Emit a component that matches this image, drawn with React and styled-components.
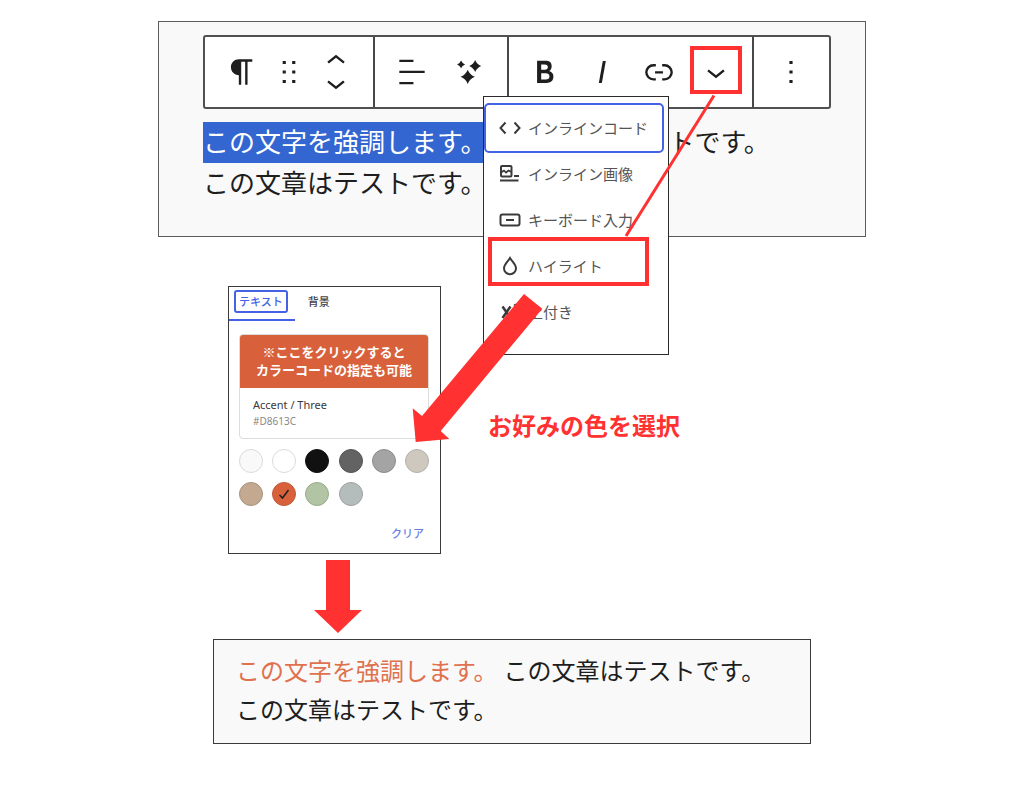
import React, { useState } from "react";
import styled, { createGlobalStyle, css } from "styled-components";

const RED = "#ff3131";
const BLUE = "#4562e4";

const GlobalStyle = createGlobalStyle`
  *, *::before, *::after {
    box-sizing: border-box;
  }
  body {
    margin: 0;
    background: #ffffff;
    color: #1e1e1e;
    font-family: "Noto Sans CJK JP", sans-serif;
  }
  button {
    font-family: inherit;
    margin: 0;
    padding: 0;
    border: 0;
    background: transparent;
    color: inherit;
    cursor: pointer;
  }
`;

const Guide = styled.main`
  position: relative;
  max-width: 708px;
  margin: 0 auto;
  padding-top: 21px;
`;

const Editor = styled.section`
  padding: 13px 34px 34px 44px;
  background: #f9f9f9;
  border: 1px solid #5c5c5c;
`;

const Toolbar = styled.div`
  position: relative;
  display: flex;
  height: 74px;
  background: #ffffff;
  border: 2px solid #505050;
  border-radius: 3px;
`;

const ToolGroup = styled.div`
  display: flex;
  flex: ${(props) => props.$grow} 1 0;
  align-items: center;
  justify-content: center;

  & + & {
    border-left: 2px solid #484848;
  }
`;

const ToolButton = styled.button`
  position: relative;
  display: flex;
  flex: none;
  align-items: center;
  justify-content: center;
  width: ${(props) => (props.$narrow ? 47 : 57)}px;
  height: ${(props) => (props.$half ? 22 : 56)}px;

  svg {
    flex: none;
    width: 38px;
    height: 38px;
    fill: currentColor;
  }

  ${(props) =>
    props.$marked &&
    css`
      &::after {
        content: "";
        position: absolute;
        inset: 2px 2px 6px 3px;
        border: 4px solid ${RED};
      }
    `}
`;

const Movers = styled.div`
  display: flex;
  flex-direction: column;
`;

const Paragraph = styled.p`
  margin: ${(props) => (props.$small ? 0 : 11)}px 0 0;
  font-size: ${(props) => (props.$small ? 24 : 26)}px;
  line-height: ${(props) => (props.$small ? 39 : 41)}px;
  white-space: nowrap;
`;

const Selected = styled.span`
  padding-bottom: 4px;
  background: #3366d0;
  color: #ffffff;
`;

const Colored = styled.span`
  margin-right: 6px;
  color: #e0714f;
`;

const Menu = styled.div`
  position: absolute;
  top: 59px;
  left: 278px;
  z-index: 1;
  width: 186px;
  padding: 8px 6px 19px 2px;
  background: #ffffff;
  border: 1px solid #2b2b2b;
`;

const MenuItem = styled.button`
  position: relative;
  display: flex;
  align-items: center;
  gap: 4px;
  width: 100%;
  height: 46px;
  padding-left: 10px;
  color: #555555;
  font-size: 15px;
  line-height: 22px;
  white-space: nowrap;

  svg {
    flex: none;
    width: 28px;
    height: 28px;
    color: #3a3a3a;
    fill: currentColor;
  }

  ${(props) =>
    props.$focused &&
    css`
      outline: 2px solid ${BLUE};
      border-radius: 3px;
    `}

  ${(props) =>
    props.$marked &&
    css`
      &::after {
        content: "";
        position: absolute;
        inset: -6px 13px 3px 2px;
        border: 4px solid ${RED};
      }
    `}
`;

const PickStep = styled.div`
  display: flex;
  align-items: center;
  gap: 47px;
  margin-top: 49px;
  padding-left: 70px;
`;

const ColorPanel = styled.section`
  flex: none;
  width: 213px;
  height: 268px;
  background: #ffffff;
  border: 1px solid #3a3a3a;
`;

const Tabs = styled.div`
  display: flex;
`;

const Tab = styled.button`
  height: 34px;
  padding: 3px 7px 7px 5px;
  border-bottom: 2px solid ${(props) => (props.$active ? BLUE : "transparent")};
  color: ${(props) => (props.$active ? BLUE : "#444444")};
  font-size: 11px;
  font-weight: 500;
  line-height: 19px;

  span {
    display: block;
    padding: 0 3px;
    border: 2px solid ${(props) => (props.$active ? BLUE : "transparent")};
    border-radius: 3px;
  }

  & + & {
    padding-left: 8px;
  }
`;

const PanelBody = styled.div`
  display: flex;
  flex-direction: column;
  padding: 13px 11px 0 10px;
`;

const ColorCard = styled.button`
  display: block;
  overflow: hidden;
  border: 1px solid #dcdcdc;
  border-radius: 4px;
  text-align: left;
`;

const CardBanner = styled.span`
  display: block;
  margin: -1px -1px 0;
  padding: 9px 0;
  background: #d8613c;
  color: #ffffff;
  font-size: 13px;
  font-weight: 700;
  line-height: 18px;
  text-align: center;
  white-space: nowrap;
`;

const CardInfo = styled.span`
  display: block;
  padding: 9px 13px;
  font-family: "Noto Sans", sans-serif;
  color: #3a3a3a;
  font-size: 11px;
  line-height: 16px;

  small {
    display: block;
    color: #888888;
    font-size: 10px;
  }
`;

const Swatches = styled.div`
  display: grid;
  grid-template-columns: repeat(6, 24px);
  justify-content: space-between;
  row-gap: 9px;
  margin-top: 10px;
`;

const Swatch = styled.button`
  display: flex;
  align-items: center;
  justify-content: center;
  width: 24px;
  height: 24px;
  background: ${(props) => props.$color};
  border: 1px solid ${(props) => props.$edge};
  border-radius: 50%;

  svg {
    width: 14px;
    height: 14px;
  }
`;

const ClearButton = styled.button`
  align-self: flex-end;
  margin: 18px 5px 0 0;
  color: #6880e8;
  font-size: 11px;
  font-weight: 500;
  line-height: 18px;
`;

const Note = styled.p`
  margin: 0;
  padding-top: 10px;
  color: ${RED};
  font-size: 24px;
  font-weight: 700;
  line-height: 36px;
  white-space: nowrap;
`;

const DownArrow = styled.svg`
  display: block;
  width: 48px;
  height: 73px;
  margin: 6px 0 6px 156px;
  fill: ${RED};
`;

const Result = styled.section`
  max-width: 598px;
  margin: 0 auto;
  padding: 10px 22px 15px;
  background: #f9f9f9;
  border: 1px solid #3a3a3a;
`;

const Annotations = styled.svg`
  position: absolute;
  top: 0;
  left: 0;
  z-index: 2;
  width: 708px;
  height: 460px;
  pointer-events: none;
`;

const icons = {
  paragraph:
    "m9.996 14v-.225l.004 0v6.225h1.5v-14.5h2.5v14.5h1.5v-14.5h3v-1.5h-8.504c-2.761 0-5 2.239-5 5 0 2.761 2.239 5 5 5z",
  drag: "M8 7h2V5H8v2zm0 6h2v-2H8v2zm0 6h2v-2H8v2zm6-14v2h2V5h-2zm0 8h2v-2h-2v2zm0 6h2v-2h-2v2z",
  up: "M6.5 12.4L12 8l5.5 4.4-.9 1.2L12 10l-4.5 3.6-1-1.2z",
  down: "M17.5 11.6L12 16l-5.5-4.4.9-1.2L12 14l4.5-3.6 1 1.2z",
  align: "M4 19.8h8.9v-1.5H4v1.5zm8.9-15.6H4v1.5h8.9V4.2zm-8.9 7v1.5h16v-1.5H4z",
  sparkles:
    "M11.2 10.500q1.300 3.200 4.500 4.500-3.200 1.300-4.500 4.500-1.300-3.200-4.500-4.500 3.200-1.300 4.500-4.500zM15.900 4.400q1.100 2.700 3.800 3.800-2.700 1.100-3.800 3.800-1.100-2.700-3.800-3.800 2.700-1.100 3.800-3.800zM7 4.700q.7 1.800 2.500 2.500-1.800.7-2.500 2.500-.7-1.800-2.500-2.500 1.800-.7 2.500-2.500z",
  bold: "M14.7 11.3c1-.6 1.5-1.6 1.5-3 0-2.3-1.3-3.4-4-3.4H7v14h5.8c1.4 0 2.5-.3 3.3-1 .8-.7 1.2-1.7 1.2-2.9.1-1.9-.8-3.1-2.6-3.7zm-5.1-4h2.3c.6 0 1.1.1 1.4.4.3.3.5.7.5 1.2s-.2 1-.5 1.2c-.3.3-.8.4-1.4.4H9.6V7.3zm4.6 9c-.4.3-1 .4-1.7.4H9.6v-3.9h2.9c.7 0 1.3.2 1.7.5.4.3.6.8.6 1.5s-.2 1.2-.6 1.5z",
  italic: "M12.5 5L10 19h1.9l2.5-14z",
  link: "M10 17.389H8.444A5.194 5.194 0 1 1 8.444 7H10v1.5H8.444a3.694 3.694 0 0 0 0 7.389H10v1.5ZM14 7h1.556a5.194 5.194 0 0 1 0 10.39H14v-1.5h1.556a3.694 3.694 0 0 0 0-7.39H14V7Zm-4.5 6h5v-1.5h-5V13Z",
  more: "M13 19h-2v-2h2v2zm0-6h-2v-2h2v2zm0-6h-2V5h2v2z",
};

function Icon({ name }) {
  return (
    <svg viewBox="0 0 24 24" aria-hidden="true">
      <path d={icons[name]} />
    </svg>
  );
}

function StrokeIcon({ children }) {
  return (
    <svg viewBox="0 0 28 28" aria-hidden="true">
      <g fill="none" stroke="currentColor" strokeWidth="2">
        {children}
      </g>
    </svg>
  );
}

const menuItems = [
  {
    label: "インラインコード",
    icon: (
      <StrokeIcon>
        <path d="M9.500 8.500L4.500 14l5 5.500M18.500 8.500l5 5.500-5 5.500" />
      </StrokeIcon>
    ),
    focused: true,
  },
  {
    label: "インライン画像",
    icon: (
      <StrokeIcon>
        <rect x="5" y="6" width="10.500" height="10.500" rx="1" />
        <path d="M5 12.500l3-2 2 2 2.500-2 3 1.500" strokeWidth="1.700" />
        <path d="M18 16h5M4 20.500h18.500" />
      </StrokeIcon>
    ),
  },
  {
    label: "キーボード入力",
    icon: (
      <StrokeIcon>
        <rect x="4.500" y="8.500" width="19" height="11" rx="2" />
        <path d="M10 14h8" />
      </StrokeIcon>
    ),
  },
  {
    label: "ハイライト",
    icon: (
      <StrokeIcon>
        <path d="M14 6c-2 3.500-6 6.500-6 10.300a6 6 0 0 0 12 0c0-3.800-4-6.800-6-10.300z" />
      </StrokeIcon>
    ),
    marked: true,
  },
  {
    label: "上付き",
    icon: (
      <StrokeIcon>
        <path d="M6.500 8.500l8 11.500M14.500 8.500l-8 11.500" strokeWidth="2.500" />
        <path d="M18 7.500c2-2 4-.5 3 1l-3 3h4" strokeWidth="1.500" />
      </StrokeIcon>
    ),
  },
];

const swatches = [
  { name: "Base", color: "#f9f9f9", edge: "#dadada" },
  { name: "Base / Two", color: "#ffffff", edge: "#dadada" },
  { name: "Contrast", color: "#111111", edge: "#111111" },
  { name: "Contrast / Two", color: "#636363", edge: "#555555" },
  { name: "Contrast / Three", color: "#a4a4a4", edge: "#8c8c8c" },
  { name: "Accent", color: "#cfc8be", edge: "#b4b0aa" },
  { name: "Accent / Two", color: "#c2a990", edge: "#a8937e" },
  { name: "Accent / Three", color: "#d8613c", edge: "#c05a3a" },
  { name: "Accent / Four", color: "#b1c5a4", edge: "#99aa8e" },
  { name: "Accent / Five", color: "#b5bdbc", edge: "#9da3a2" },
];

function BlockToolbar() {
  return (
    <Toolbar role="toolbar" aria-label="ブロックツール">
      <ToolGroup $grow={170}>
        <ToolButton $narrow aria-label="段落">
          <Icon name="paragraph" />
        </ToolButton>
        <ToolButton $narrow aria-label="ドラッグ">
          <Icon name="drag" />
        </ToolButton>
        <Movers>
          <ToolButton $narrow $half aria-label="上に移動">
            <Icon name="up" />
          </ToolButton>
          <ToolButton $narrow $half aria-label="下に移動">
            <Icon name="down" />
          </ToolButton>
        </Movers>
      </ToolGroup>
      <ToolGroup $grow={133}>
        <ToolButton aria-label="配置">
          <Icon name="align" />
        </ToolButton>
        <ToolButton aria-label="AI">
          <Icon name="sparkles" />
        </ToolButton>
      </ToolGroup>
      <ToolGroup $grow={246}>
        <ToolButton aria-label="太字">
          <Icon name="bold" />
        </ToolButton>
        <ToolButton aria-label="イタリック">
          <Icon name="italic" />
        </ToolButton>
        <ToolButton aria-label="リンク">
          <Icon name="link" />
        </ToolButton>
        <ToolButton $marked aria-label="さらに表示" aria-expanded="true">
          <Icon name="down" />
        </ToolButton>
      </ToolGroup>
      <ToolGroup $grow={76}>
        <ToolButton aria-label="オプション">
          <Icon name="more" />
        </ToolButton>
      </ToolGroup>
      <Menu role="menu">
        {menuItems.map((item) => (
          <MenuItem
            key={item.label}
            role="menuitem"
            $focused={item.focused}
            $marked={item.marked}
          >
            {item.icon}
            {item.label}
          </MenuItem>
        ))}
      </Menu>
    </Toolbar>
  );
}

function ColorPicker() {
  const [picked, setPicked] = useState("Accent / Three");

  return (
    <ColorPanel>
      <Tabs role="tablist">
        <Tab role="tab" aria-selected="true" $active>
          <span>テキスト</span>
        </Tab>
        <Tab role="tab" aria-selected="false">
          <span>背景</span>
        </Tab>
      </Tabs>
      <PanelBody>
        <ColorCard>
          <CardBanner>
            ※ここをクリックすると
            <br />
            カラーコードの指定も可能
          </CardBanner>
          <CardInfo>
            Accent / Three
            <small>#D8613C</small>
          </CardInfo>
        </ColorCard>
        <Swatches>
          {swatches.map((swatch) => (
            <Swatch
              key={swatch.name}
              aria-label={swatch.name}
              $color={swatch.color}
              $edge={swatch.edge}
              onClick={() => setPicked(swatch.name)}
            >
              {picked === swatch.name && (
                <svg viewBox="0 0 14 14" aria-hidden="true">
                  <path
                    d="M2.500 8l3 3 6-8"
                    fill="none"
                    stroke="#1e1e1e"
                    strokeWidth="1.500"
                  />
                </svg>
              )}
            </Swatch>
          ))}
        </Swatches>
        <ClearButton onClick={() => setPicked(null)}>クリア</ClearButton>
      </PanelBody>
    </ColorPanel>
  );
}

export default function App() {
  return (
    <>
      <GlobalStyle />
      <Guide>
        <Editor>
          <BlockToolbar />
          <Paragraph>
            <Selected>この文字を強調します。</Selected>この文章はテストです。
            <br />
            この文章はテストです。
          </Paragraph>
        </Editor>
        <PickStep>
          <ColorPicker />
          <Note>お好みの色を選択</Note>
        </PickStep>
        <DownArrow viewBox="0 0 48 73" aria-hidden="true">
          <path d="M12 0h24v50h12L24 73 0 50h12z" />
        </DownArrow>
        <Result>
          <Paragraph $small>
            <Colored>この文字を強調します。</Colored>この文章はテストです。
            <br />
            この文章はテストです。
          </Paragraph>
        </Result>
        <Annotations viewBox="0 0 708 460" aria-hidden="true">
          <path d="M556 95.500L468 236" stroke={RED} strokeWidth="3" />
          <path
            d="M366 294l18.300 14.700L282.700 431l8.600 8-33.600 3-3-33.700 9.300 7.700z"
            fill={RED}
          />
        </Annotations>
      </Guide>
    </>
  );
}
